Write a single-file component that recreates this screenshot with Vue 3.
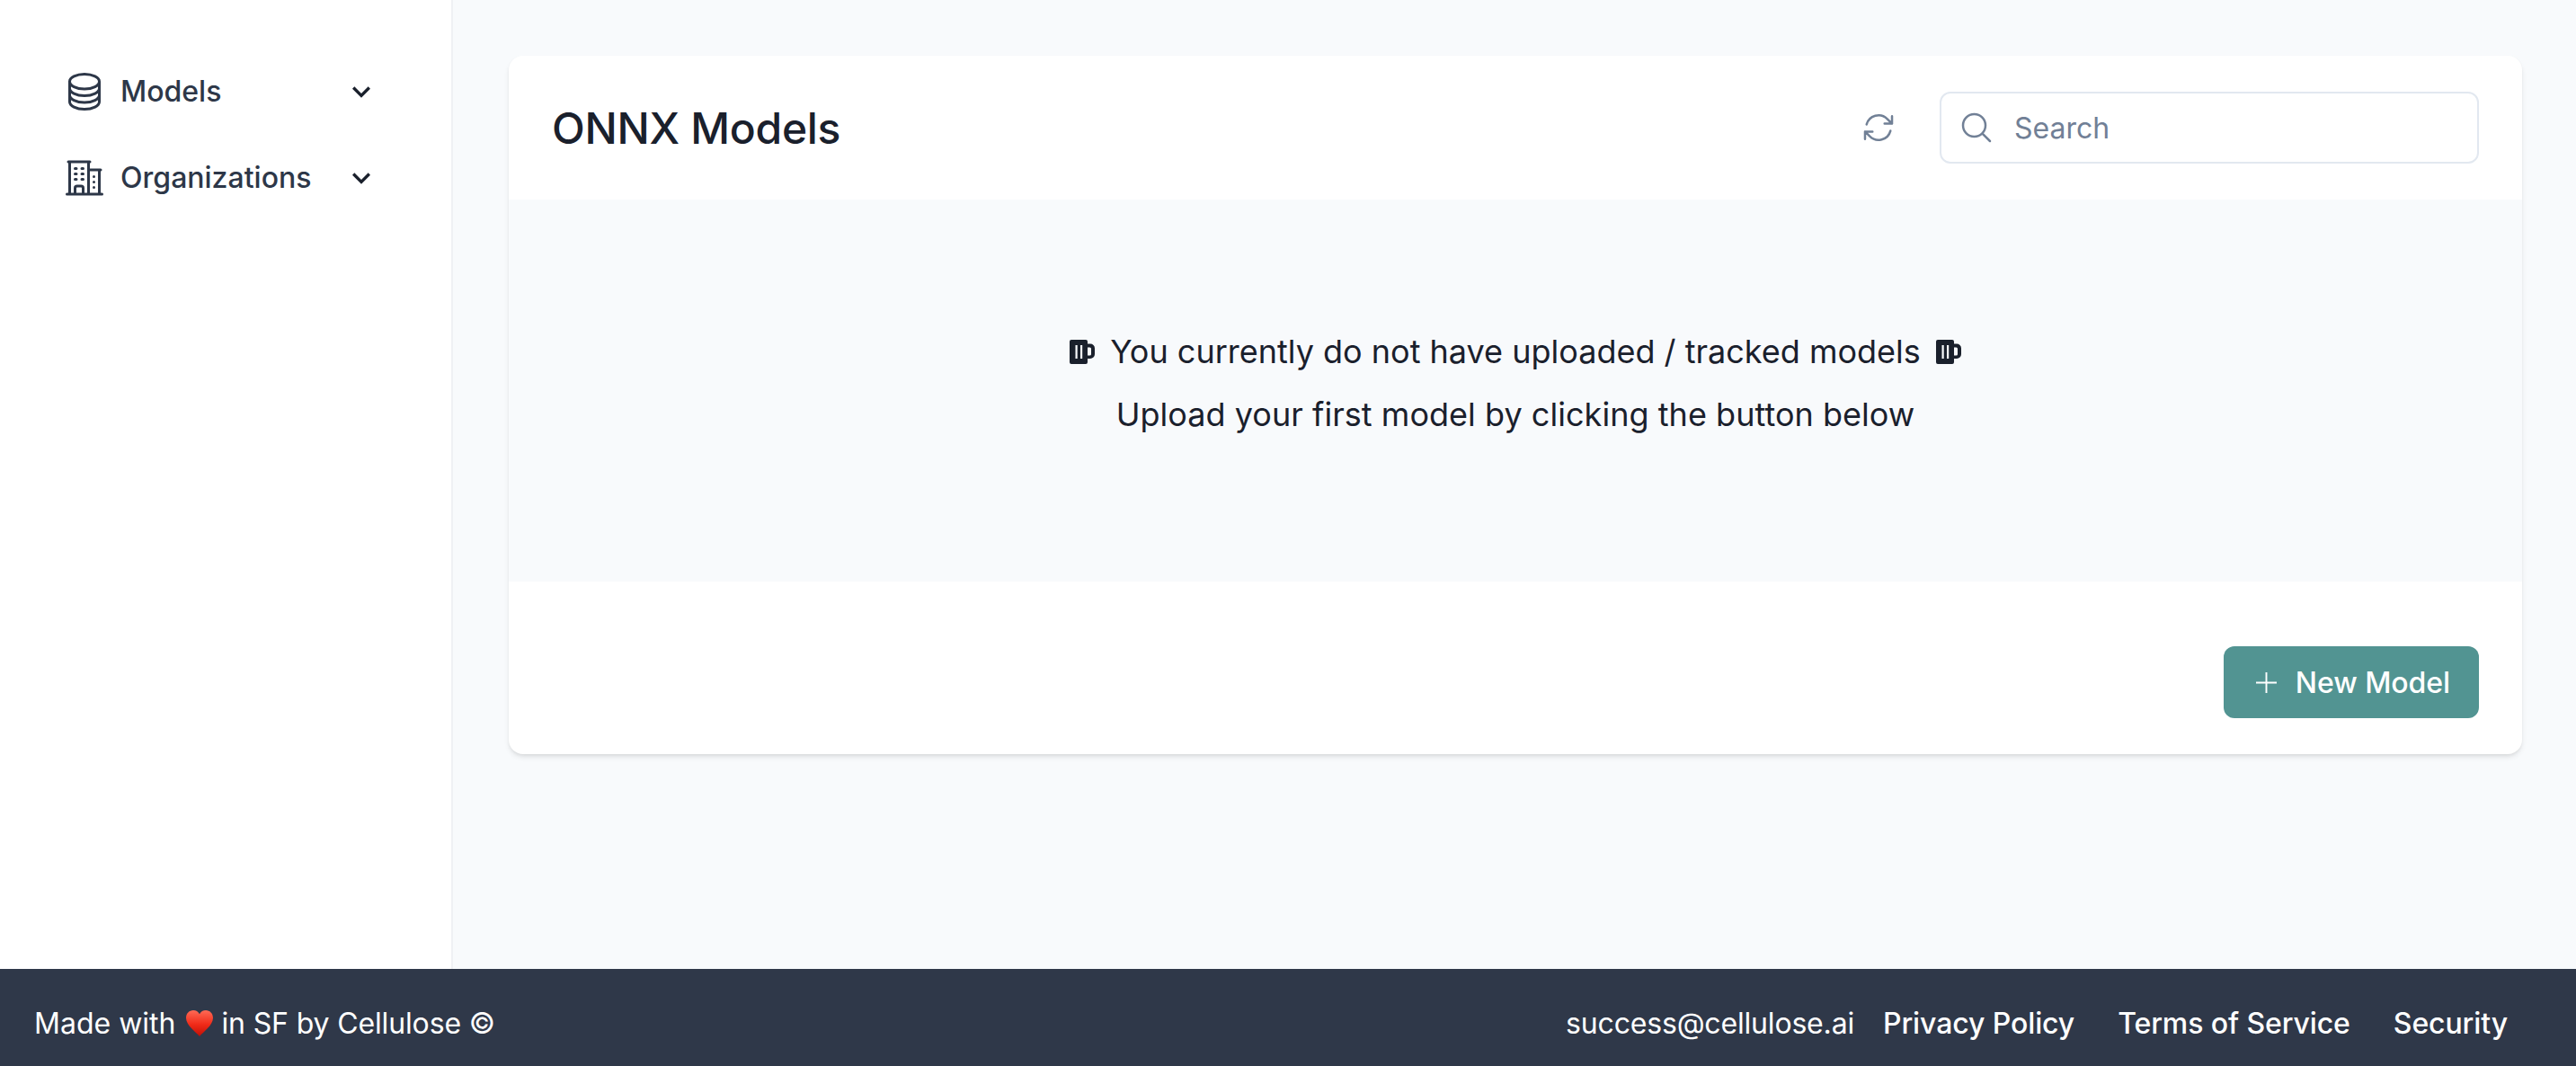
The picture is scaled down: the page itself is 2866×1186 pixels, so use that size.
<script setup>
const navItems = [
  {
    label: 'Models',
    icon: 'M20.25 6.375c0 2.278-3.694 4.125-8.25 4.125S3.75 8.653 3.75 6.375m16.5 0c0-2.278-3.694-4.125-8.25-4.125S3.75 4.097 3.75 6.375m16.5 0v11.25c0 2.278-3.694 4.125-8.25 4.125s-8.25-1.847-8.25-4.125V6.375m16.5 0v3.75m-16.5-3.75v3.75m16.5 0v3.75C20.25 16.153 16.556 18 12 18s-8.25-1.847-8.25-4.125v-3.75m16.5 0c0 2.278-3.694 4.125-8.25 4.125s-8.25-1.847-8.25-4.125',
  },
  {
    label: 'Organizations',
    icon: 'M2.25 21h19.5m-18-18v18m10.5-18v18m6-13.5V21M6.75 6.75h.75m-.75 3h.75m-.75 3h.75m3-6h.75m-.75 3h.75m-.75 3h.75M6.75 21v-3.375c0-.621.504-1.125 1.125-1.125h2.25c.621 0 1.125.504 1.125 1.125V21M3 3h12m-.75 4.5H21m-3.75 3.75h.008v.008h-.008v-.008zm0 3h.008v.008h-.008v-.008zm0 3h.008v.008h-.008v-.008z',
  },
]

const footerLinks = ['Privacy Policy', 'Terms of Service', 'Security']
</script>

<template>
  <div class="page">
    <div class="content">
      <aside class="sidebar">
        <div v-for="item in navItems" :key="item.label" class="nav-item">
          <svg class="nav-icon" viewBox="0 0 24 24" fill="none" stroke="currentColor" stroke-width="1.5" stroke-linecap="round" stroke-linejoin="round">
            <path :d="item.icon" />
          </svg>
          <span class="nav-label">{{ item.label }}</span>
          <svg class="nav-chevron" viewBox="0 0 24 24" fill="currentColor">
            <path d="M16.59 8.59L12 13.17 7.41 8.59 6 10l6 6 6-6z" />
          </svg>
        </div>
      </aside>

      <main class="main">
        <section class="card">
          <header class="card-header">
            <h1 class="title">ONNX Models</h1>
            <div class="tools">
              <svg class="refresh" viewBox="0 0 24 24" fill="none" stroke="currentColor" stroke-width="1.5" stroke-linecap="round" stroke-linejoin="round">
                <path d="M16.023 9.348h4.992v-.001M2.985 19.644v-4.992m0 0h4.992m-4.993 0l3.181 3.183a8.25 8.25 0 0013.803-3.7M4.031 9.865a8.25 8.25 0 0113.803-3.7l3.181 3.182m0-4.991v4.99" />
              </svg>
              <label class="search">
                <svg class="search-icon" viewBox="0 0 24 24" fill="none" stroke="currentColor" stroke-width="1.5" stroke-linecap="round" stroke-linejoin="round">
                  <path d="M21 21l-5.197-5.197m0 0A7.5 7.5 0 105.196 5.196a7.5 7.5 0 0010.607 10.607z" />
                </svg>
                <input class="search-input" type="text" placeholder="Search" />
              </label>
            </div>
          </header>

          <div class="empty">
            <p class="empty-line">
              <svg class="mug" viewBox="0 0 28 27" fill="currentColor" fill-rule="evenodd">
                <path d="M2 0h16a2 2 0 0 1 2 2v2.500h3a5 5 0 0 1 5 5v6.500a5 5 0 0 1-5 5h-3v4a2 2 0 0 1-2 2H2a2 2 0 0 1-2-2V2a2 2 0 0 1 2-2zM6.500 6v15h2.200V6zM12 6v15h2.200V6zM20 8.500v9h2.500a1.500 1.500 0 0 0 1.500-1.500v-6a1.500 1.500 0 0 0-1.500-1.500z" />
              </svg>
              <span>You currently do not have uploaded / tracked models</span>
              <svg class="mug" viewBox="0 0 28 27" fill="currentColor" fill-rule="evenodd">
                <path d="M2 0h16a2 2 0 0 1 2 2v2.500h3a5 5 0 0 1 5 5v6.500a5 5 0 0 1-5 5h-3v4a2 2 0 0 1-2 2H2a2 2 0 0 1-2-2V2a2 2 0 0 1 2-2zM6.500 6v15h2.200V6zM12 6v15h2.200V6zM20 8.500v9h2.500a1.500 1.500 0 0 0 1.500-1.500v-6a1.500 1.500 0 0 0-1.500-1.500z" />
              </svg>
            </p>
            <p class="empty-line upload-line">Upload your first model by clicking the button below</p>
          </div>

          <div class="card-footer">
            <button class="new-model" type="button">
              <svg class="plus" viewBox="0 0 24 24" fill="none" stroke="currentColor" stroke-width="2">
                <path d="M12 0v24M0 12h24" />
              </svg>
              New Model
            </button>
          </div>
        </section>
      </main>
    </div>

    <footer class="footer">
      <div class="made-with">
        Made with
        <svg class="heart" viewBox="0 0 30 29">
          <defs>
            <linearGradient id="heart-fill" x1="0" y1="0" x2="0" y2="1">
              <stop offset="0" stop-color="#ff6a55" />
              <stop offset="0.55" stop-color="#f02a18" />
              <stop offset="1" stop-color="#c01006" />
            </linearGradient>
          </defs>
          <path d="M15 29C11 24 0 17 0 8.500C0 3.500 3.600 0 8 0c3 0 5.600 1.500 7 4.200C16.400 1.500 19 0 22 0c4.400 0 8 3.500 8 8.500C30 17 19 24 15 29z" fill="url(#heart-fill)" />
        </svg>
        <span class="made-tail">in SF by Cellulose ©</span>
      </div>
      <nav class="footer-right">
        <span class="email">success@cellulose.ai</span>
        <a v-for="link in footerLinks" :key="link" class="footer-link">{{ link }}</a>
      </nav>
    </footer>
  </div>
</template>

<style>
html, body { margin: 0; padding: 0; }
</style>

<style scoped>
.page {
  display: flex;
  flex-direction: column;
  height: 100vh;
  overflow: hidden;
  font-family: Inter, "Liberation Sans", sans-serif;
  color: #1a202c;
  background: #f8fafc;
}

.content { flex: 1; display: flex; min-height: 0; }

/* 사이드바 */
.sidebar {
  width: 502px;
  flex-shrink: 0;
  box-sizing: content-box;
  padding-top: 54px;
  background: #fff;
  border-right: 2px solid #eff1f4;
}

.nav-item {
  display: flex;
  align-items: center;
  height: 96px;
  padding-left: 70px;
  color: #2d3748;
}

.nav-icon { width: 48px; height: 48px; flex-shrink: 0; }

.nav-label {
  margin-left: 16px;
  font-size: 32px;
  font-weight: 500;
  line-height: 48px;
  flex: 1;
}

.nav-chevron {
  width: 40px;
  height: 40px;
  margin-right: 80px;
  color: #1a202c;
}

/* 메인 */
.main {
  flex: 1;
  padding: 62px 60px 0 62px;
  min-width: 0;
}

.card {
  background: #fff;
  border-radius: 16px;
  box-shadow: 0 4px 6px -1px rgba(0, 0, 0, 0.1), 0 2px 4px -1px rgba(0, 0, 0, 0.06);
  overflow: hidden;
}

.card-header {
  height: 160px;
  display: flex;
  align-items: center;
  justify-content: space-between;
  padding: 0 48px;
}

.title {
  margin: 0;
  font-size: 48px;
  font-weight: 500;
  letter-spacing: -0.3px;
  color: #1a202c;
}

.tools { display: flex; align-items: center; gap: 48px; }

.refresh { width: 40px; height: 40px; color: #718096; }

.search {
  width: 600px;
  height: 80px;
  box-sizing: border-box;
  display: flex;
  align-items: center;
  padding-left: 19px;
  border: 2px solid #e2e8f0;
  border-radius: 12px;
}

.search-icon { width: 40px; height: 40px; color: #718096; flex-shrink: 0; }

.search-input {
  flex: 1;
  min-width: 0;
  margin-left: 22px;
  padding: 0;
  border: 0;
  outline: 0;
  background: transparent;
  font-family: inherit;
  font-size: 32px;
  color: #1a202c;
}
.search-input::placeholder { color: #718096; opacity: 1; }

.empty {
  height: 425px;
  box-sizing: border-box;
  padding-top: 142px;
  background: #f8fafc;
  display: flex;
  flex-direction: column;
  gap: 16px;
}

.empty-line {
  margin: 0;
  display: flex;
  justify-content: center;
  align-items: center;
  gap: 17px;
  font-size: 36px;
  line-height: 54px;
  color: #1a202c;
}

.upload-line { letter-spacing: 0.04px; }

.mug { width: 28px; height: 27px; flex-shrink: 0; }

.card-footer {
  height: 192px;
  box-sizing: border-box;
  display: flex;
  justify-content: flex-end;
  padding: 72px 48px 40px;
}

.new-model {
  height: 80px;
  width: 284px;
  display: flex;
  align-items: center;
  justify-content: center;
  gap: 21px;
  padding: 0 0 0 4px;
  border: 0;
  border-radius: 12px;
  background: #529492;
  color: #fff;
  font-family: inherit;
  font-size: 32px;
  font-weight: 500;
  letter-spacing: -0.05px;
}

.plus { width: 23px; height: 23px; }

/* 푸터 */
.footer {
  height: 108px;
  flex-shrink: 0;
  box-sizing: border-box;
  display: flex;
  align-items: center;
  justify-content: space-between;
  padding: 12px 76px 0 38px;
  background: #2f3849;
  color: #fff;
  font-size: 32px;
}

.heart { width: 30px; height: 29px; margin: 0 9px 0 3px; vertical-align: -3px; }

.made-tail { letter-spacing: -0.14px; }

.footer-right { display: flex; align-items: center; }

.email { margin-right: 32px; letter-spacing: -0.18px; }

.footer-link { margin-right: 48px; font-weight: 500; letter-spacing: -0.1px; }
.footer-link:last-child { margin-right: 0; }
</style>
